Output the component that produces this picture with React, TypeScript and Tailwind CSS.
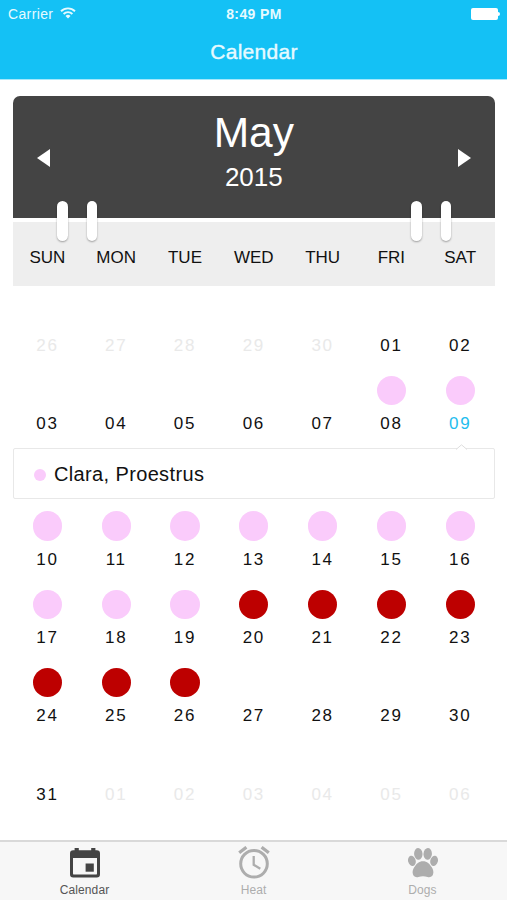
type Dot = 'pink' | 'red' | null;
type Day = { n: string; dot?: Dot; muted?: boolean; selected?: boolean };

const range = (from: number, to: number, extra: Partial<Day> = {}): Day[] =>
  Array.from({ length: to - from + 1 }, (_, i) => ({ n: String(from + i).padStart(2, '0'), ...extra }));

const weeksBefore: Day[][] = [
  [...range(26, 30, { muted: true }), ...range(1, 2)],
  [...range(3, 7), ...range(8, 8, { dot: 'pink' }), ...range(9, 9, { dot: 'pink', selected: true })],
];

const weeksAfter: Day[][] = [
  range(10, 16, { dot: 'pink' }),
  [...range(17, 19, { dot: 'pink' }), ...range(20, 23, { dot: 'red' })],
  [...range(24, 26, { dot: 'red' }), ...range(27, 30)],
  [...range(31, 31), ...range(1, 6, { muted: true })],
];

const weekdays = ['SUN', 'MON', 'TUE', 'WED', 'THU', 'FRI', 'SAT'];

function Week({ days }: { days: Day[] }) {
  return (
    <div className="grid h-[78.2px] grid-cols-7">
      {days.map((d, i) => (
        <div key={i} className="flex flex-col items-center pt-3">
          <div
            className={`size-[29.4px] rounded-full ${
              d.dot === 'pink' ? 'bg-[#facbfb]' : d.dot === 'red' ? 'bg-[#bd0000]' : ''
            }`}
          />
          <div
            className={`mt-[9.2px] text-[17px] leading-5 tracking-[1.7px] ${
              d.selected ? 'text-[#1fbdee]' : d.muted ? 'text-[#e9e9e9]' : 'text-[#111]'
            }`}
          >
            {d.n}
          </div>
        </div>
      ))}
    </div>
  );
}

function Rings({ className }: { className: string }) {
  return (
    <div className={`absolute top-[105px] flex gap-[19px] ${className}`}>
      {[0, 1].map((i) => (
        <div key={i} className="h-10 w-[10.5px] rounded-full bg-white shadow-[0_1px_2px_rgba(0,0,0,0.35)]" />
      ))}
    </div>
  );
}

function StatusBar() {
  return (
    <div className="grid h-7 grid-cols-3 items-center pr-[7px] pl-2 text-[14px] text-[#e6faff]">
      <div className="flex items-center gap-[7px] tracking-[0.36px]">
        Carrier
        <svg className="-mt-[2px]" width="16" height="12" viewBox="0 0 16 12" fill="none" stroke="#e6faff" strokeWidth="1.9">
          <path d="M1 4.2a10 10 0 0 1 14 0" />
          <path d="M3.6 7a6.2 6.2 0 0 1 8.8 0" />
          <path d="M8 11.6 5.5 9a3.5 3.5 0 0 1 5 0z" fill="#e6faff" stroke="none" />
        </svg>
      </div>
      <div className="text-center font-bold tracking-[0.4px]">8:49 PM</div>
      <div className="flex items-center justify-end">
        <div className="h-[11.5px] w-[27px] rounded-[2px] bg-white" />
        <div className="ml-[0.5px] h-1 w-[2px] rounded-r-full bg-white" />
      </div>
    </div>
  );
}

function CalendarIcon() {
  return (
    <svg width="30" height="30" viewBox="0 0 30 30">
      <path
        fillRule="evenodd"
        fill="#444"
        d="M4.600 0h4.200v2.200h12.400V0h4.200v2.200h1.400A3.200 3.200 0 0 1 30 5.400v20.800a3.200 3.200 0 0 1-3.200 3.200H3.200A3.200 3.200 0 0 1 0 26.200V5.400a3.200 3.200 0 0 1 3.200-3.200h1.400zM3 10v15.400a1.200 1.200 0 0 0 1.200 1.200h21.600a1.200 1.200 0 0 0 1.200-1.200V10z"
      />
      <rect x="15.600" y="15.500" width="8.200" height="8.200" fill="#444" />
    </svg>
  );
}

function AlarmIcon() {
  return (
    <svg width="32" height="33" viewBox="0 0 32 33" fill="none" stroke="#adadad">
      <circle cx="16" cy="17.800" r="13.300" strokeWidth="3" />
      <path d="M15.700 10v8.800l6.600 4" strokeWidth="2.300" />
      <path d="M1.200 6.800 8.400 1.200M23.600 1.200l7.200 5.600" strokeWidth="3.200" />
    </svg>
  );
}

function PawIcon() {
  return (
    <svg width="30" height="30" viewBox="0 0 30 30" fill="#adadad">
      <ellipse cx="10.300" cy="5.900" rx="4.200" ry="5.900" transform="rotate(-4 10.300 5.900)" />
      <ellipse cx="19.700" cy="5.900" rx="4.200" ry="5.900" transform="rotate(4 19.700 5.900)" />
      <ellipse cx="3.900" cy="12.900" rx="3.800" ry="5.200" transform="rotate(-14 3.900 12.900)" />
      <ellipse cx="26.100" cy="12.900" rx="3.800" ry="5.200" transform="rotate(14 26.100 12.900)" />
      <path d="M15 13.200c4.200 0 6.500 2.600 8.600 5.900 1.600 2.500 2.300 5 1.400 7.400-.9 2.400-3.200 3.200-5.400 2.600-1.600-.5-2.900-.8-4.600-.8s-3 .3-4.600.8c-2.200.6-4.500-.2-5.400-2.600-.9-2.400-.2-4.900 1.400-7.400 2.100-3.300 4.400-5.900 8.600-5.900z" />
    </svg>
  );
}

const tabs = [
  { label: 'Calendar', icon: <CalendarIcon />, color: 'text-[#555]' },
  { label: 'Heat', icon: <AlarmIcon />, color: 'text-[#adadad]' },
  { label: 'Dogs', icon: <PawIcon />, color: 'text-[#adadad]' },
];

export default function App() {
  return (
    <div className="flex h-[900px] w-[507px] flex-col overflow-hidden bg-white font-['Liberation_Sans',Arial,sans-serif]">
      <header className="h-20 shrink-0 border-b border-[#a5e8fb] bg-[#14c1f5]">
        <StatusBar />
        <h1 className="mt-[10px] pl-px text-center text-[21px] leading-7 tracking-[0.3px] text-[#e6faff] [-webkit-text-stroke:0.4px_#e6faff]">
          Calendar
        </h1>
      </header>

      <main className="mr-[12.400px] ml-[13px] flex-1 pt-4">
        <div className="relative">
          <div className="flex h-[122px] items-center justify-between rounded-t-[7px] bg-[#444] px-6 text-white">
            <svg className="mt-px" width="13" height="18" viewBox="0 0 13 18" fill="white">
              <path d="M13 0v18L0 9z" />
            </svg>
            <div className="pb-[10px] text-center">
              <div className="text-[42.500px] leading-[50px]">May</div>
              <div className="text-[26px] leading-[39px]">2015</div>
            </div>
            <svg className="mt-px" width="13" height="18" viewBox="0 0 13 18" fill="white">
              <path d="M0 0v18l13-9z" />
            </svg>
          </div>
          <Rings className="left-[44px]" />
          <Rings className="right-[43.500px]" />
          <div className="mt-[4px] grid h-[63.600px] grid-cols-7 bg-[#eee] pt-[26px] text-center text-[17px] leading-5 text-[#111]">
            {weekdays.map((d) => (
              <div key={d}>{d}</div>
            ))}
          </div>
        </div>

        {weeksBefore.map((w, i) => (
          <Week key={i} days={w} />
        ))}
        <div className="relative mt-[6px] mb-[0.500px] flex h-[51px] items-center rounded-[2px] border-[1.500px] border-[#e8e8e8] bg-white pl-5">
          <svg className="absolute -top-[5px] right-[27px]" width="11" height="6" viewBox="0 0 11 6" fill="white" stroke="#dedede">
            <path d="M0 5.500 5.500.8 11 5.500" />
          </svg>
          <div className="mt-[3px] size-3 rounded-full bg-[#facbfb]" />
          <div className="mt-[2px] ml-2 text-[20px] tracking-[0.360px] text-[#111]">Clara, Proestrus</div>
        </div>
        {weeksAfter.map((w, i) => (
          <Week key={i} days={w} />
        ))}
      </main>

      <nav className="grid h-[60px] shrink-0 grid-cols-3 border-t-2 border-[#d9d9d9] bg-[#f7f7f7]">
        {tabs.map((t) => (
          <div key={t.label} className={`flex flex-col items-center ${t.color}`}>
            <div className="flex h-[38px] items-center pt-[3px]">{t.icon}</div>
            <div className="text-[12px] leading-5 tracking-[0.100px]">{t.label}</div>
          </div>
        ))}
      </nav>
    </div>
  );
}
